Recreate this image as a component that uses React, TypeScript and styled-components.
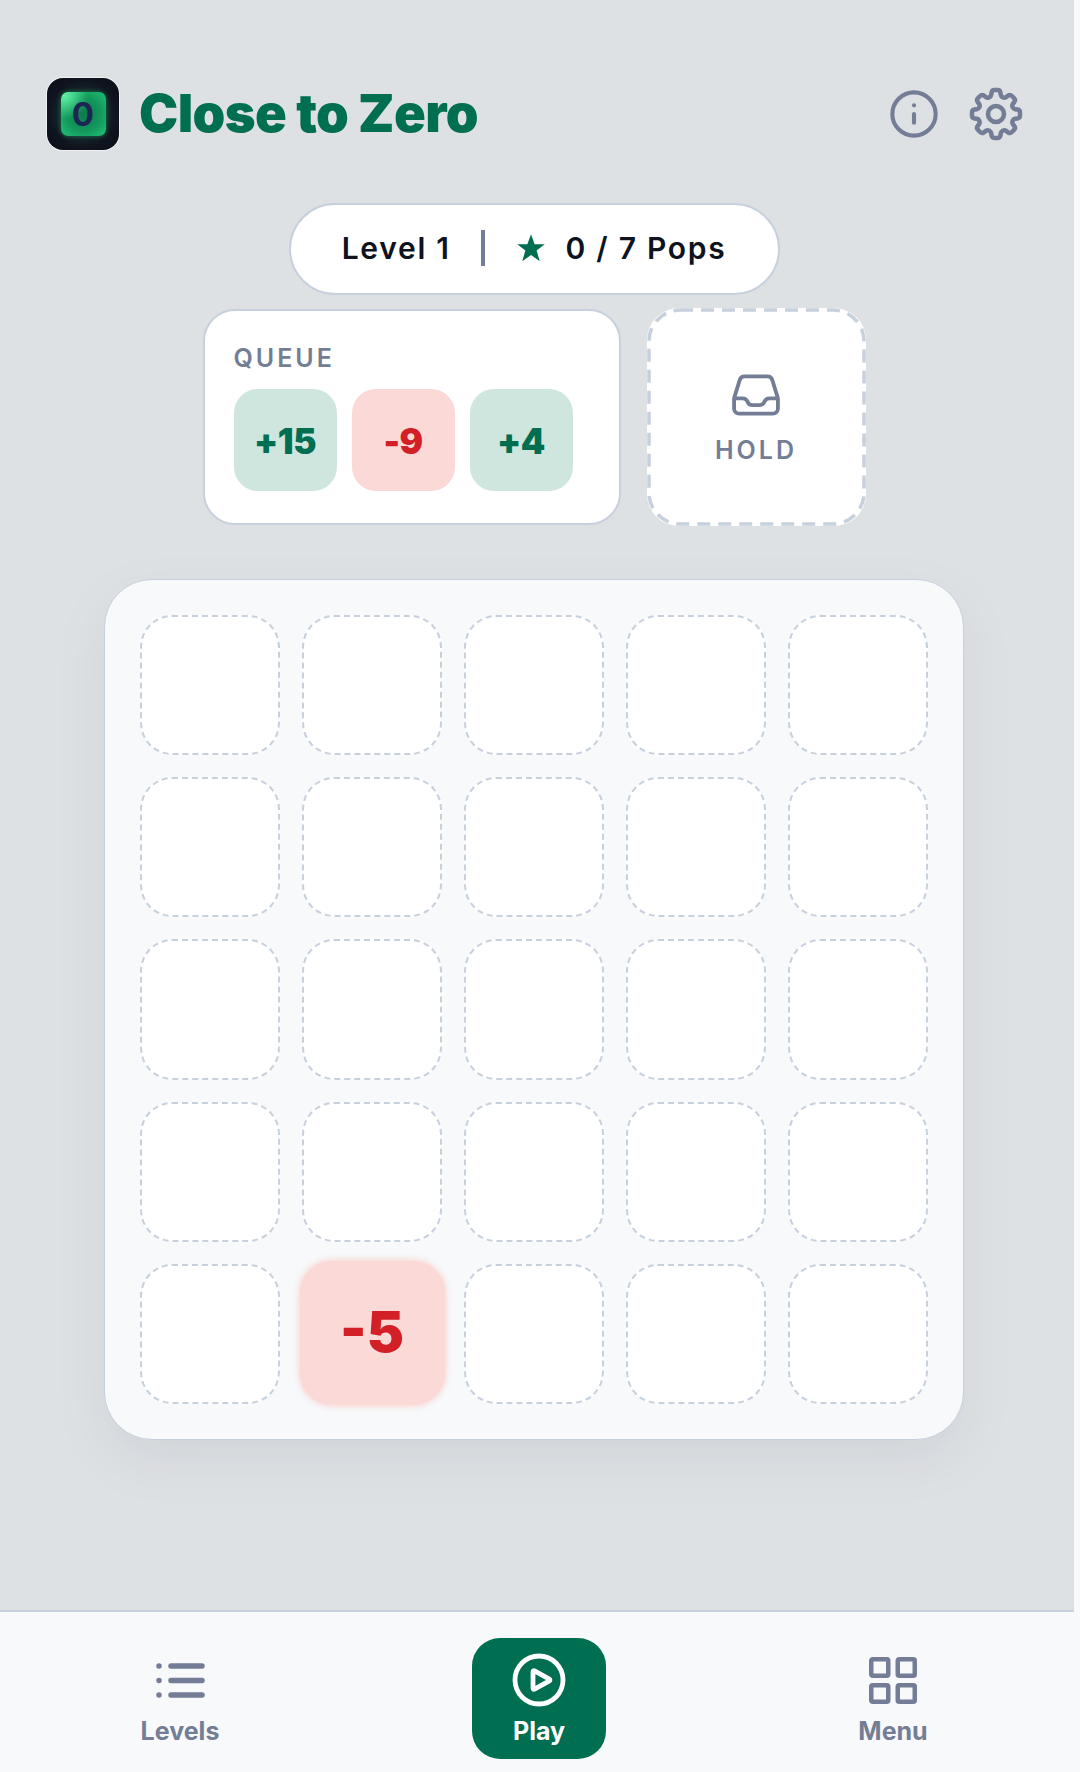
import React from 'react';
import styled, { createGlobalStyle } from 'styled-components';
import { HiOutlineCog8Tooth, HiOutlineInbox, HiOutlinePlayCircle } from 'react-icons/hi2';
import { Info } from 'lucide-react';

const colors = {
  page: '#dee1e4',
  panel: '#f7f9fb',
  line: '#c7d0dd',
  slate: '#737d95',
  green: '#006e51',
  greenSoft: '#cfe6df',
  red: '#d32026',
  redSoft: '#fad9d7',
  ink: '#0e1320',
};

const GlobalStyle = createGlobalStyle`
  html, body {
    margin: 0;
    padding: 0;
    background: ${colors.panel};
    font-family: Inter, "Liberation Sans", sans-serif;
  }
`;

const Page = styled.div`
  width: 1074px;
  height: 1772px;
  background: ${colors.page};
  display: flex;
  flex-direction: column;
`;

const Main = styled.main`
  flex: 1;
  box-sizing: border-box;
  padding-right: 6px;
  display: flex;
  flex-direction: column;
  align-items: center;
`;

const Header = styled.header`
  align-self: stretch;
  display: flex;
  align-items: center;
  justify-content: space-between;
  padding: 78px 40px 0 47px;
  height: 72px;
`;

const Brand = styled.div`
  display: flex;
  align-items: center;
  gap: 20px;
`;

const Logo = styled.div`
  width: 72px;
  height: 72px;
  border-radius: 16px;
  background: radial-gradient(circle at 50% 50%, #1d4a3c 0%, #10141f 66%, #0b0e16 100%);
  box-shadow: 0 0 0 1px rgba(255, 255, 255, 0.5);
  display: flex;
  align-items: center;
  justify-content: center;
`;

const LogoKey = styled.div`
  width: 45px;
  height: 44px;
  border-radius: 7px;
  background:
    radial-gradient(circle at 8% 8%, #5ff0a4 0%, rgba(95, 240, 164, 0) 40%),
    radial-gradient(circle at 50% 50%, #0c7a4d 0%, #13985c 55%, #22c277 100%);
  box-shadow: 0 0 5px rgba(40, 200, 120, 0.5);
  color: #1b2652;
  font-size: 33px;
  font-weight: 700;
  display: flex;
  align-items: center;
  justify-content: center;
`;

const Title = styled.h1`
  margin: -2px 0 0;
  font-size: 52.5px;
  line-height: 56px;
  font-weight: 900;
  letter-spacing: -0.6px;
  color: ${colors.green};
`;

const HeaderIcons = styled.div`
  display: flex;
  align-items: center;
  gap: 24px;
  color: ${colors.slate};
`;

const LevelPill = styled.div`
  margin-top: 53px;
  width: 491px;
  height: 92px;
  box-sizing: border-box;
  padding-bottom: 2px;
  border: 2px solid ${colors.line};
  border-radius: 46px;
  background: #fff;
  display: flex;
  align-items: center;
  justify-content: center;
  font-size: 30px;
  font-weight: 600;
  letter-spacing: 1.7px;
  color: ${colors.ink};
`;

const Divider = styled.span`
  width: 4px;
  height: 36px;
  background: ${colors.slate};
  margin: 0 31px 0 30px;
`;

const Star = styled.span`
  color: ${colors.green};
  margin-right: 20px;
  display: flex;
`;

const TrayRow = styled.div`
  margin-top: 13px;
  display: flex;
  align-items: center;
  gap: 26px;
`;

const Queue = styled.section`
  width: 418px;
  height: 216px;
  box-sizing: border-box;
  padding: 32px 29px;
  background: #fff;
  border: 2px solid ${colors.line};
  border-radius: 32px;
`;

const TrayLabel = styled.div`
  font-size: 25px;
  line-height: 30px;
  font-weight: 600;
  letter-spacing: 3px;
  color: ${colors.slate};
`;

const Chips = styled.div`
  margin-top: 16px;
  display: flex;
  gap: 15px;
`;

const Chip = styled.div<{ $positive: boolean }>`
  width: 103px;
  height: 102px;
  box-sizing: border-box;
  padding-top: 2px;
  border-radius: 24px;
  background: ${(p) => (p.$positive ? colors.greenSoft : colors.redSoft)};
  color: ${(p) => (p.$positive ? colors.green : colors.red)};
  font-size: 35px;
  font-weight: 900;
  letter-spacing: -0.5px;
  display: flex;
  align-items: center;
  justify-content: center;
`;

const Hold = styled.section`
  position: relative;
  width: 219px;
  height: 218px;
  box-sizing: border-box;
  padding-bottom: 2px;
  background: #fff;
  border-radius: 32px;
  display: flex;
  flex-direction: column;
  align-items: center;
  justify-content: center;
  gap: 13px;
  color: ${colors.slate};
`;

// chrome's own dashes come out too short at this thickness
const HoldOutline = styled.svg`
  position: absolute;
  inset: 0;
  width: 100%;
  height: 100%;
  fill: none;
  stroke: ${colors.line};
  stroke-width: 3.5;
  stroke-dasharray: 13 8;
`;

const Board = styled.section`
  margin-top: 53px;
  width: 860px;
  height: 861px;
  box-sizing: border-box;
  padding: 35px 35px;
  background: ${colors.panel};
  border: 1px solid ${colors.line};
  border-radius: 48px;
  box-shadow: 0 20px 50px rgba(100, 110, 125, 0.1);
  display: grid;
  grid-template-columns: repeat(5, minmax(0, 1fr));
  grid-template-rows: repeat(5, minmax(0, 1fr));
  gap: 22px;
`;

const Cell = styled.div`
  box-sizing: border-box;
  background: #fff;
  border: 2px dashed ${colors.line};
  border-radius: 32px;
  display: flex;
  align-items: center;
  justify-content: center;
`;

const Tile = styled.div`
  width: 145px;
  height: 144px;
  flex: none;
  box-sizing: border-box;
  padding-bottom: 2px;
  margin-top: -1px;
  border-radius: 32px;
  background: ${colors.redSoft};
  box-shadow: 0 0 6px 1px rgba(250, 205, 200, 0.9);
  color: ${colors.red};
  font-size: 56px;
  font-weight: 900;
  display: flex;
  align-items: center;
  justify-content: center;
`;

const Nav = styled.nav`
  height: 162px;
  box-sizing: border-box;
  padding-top: 26px;
  background: ${colors.panel};
  border-top: 2px solid ${colors.line};
  display: grid;
  grid-template-columns: 360px 358px 350px;
  align-items: start;
  justify-items: center;
`;

const NavItem = styled.div<{ $active?: boolean }>`
  width: 134px;
  height: 121px;
  box-sizing: border-box;
  padding-top: 10px;
  border-radius: 28px;
  background: ${(p) => (p.$active ? colors.green : 'transparent')};
  color: ${(p) => (p.$active ? '#fff' : colors.slate)};
  font-size: 25px;
  line-height: 30px;
  font-weight: 700;
  display: flex;
  flex-direction: column;
  align-items: center;
`;

const NavIcon = styled.div`
  height: 64px;
  margin-bottom: 4px;
  display: flex;
  align-items: center;
`;

const ListIcon = styled.svg`
  width: 49px;
  height: 35px;
  fill: none;
  stroke: currentColor;
  stroke-width: 5.5;
  stroke-linecap: round;
`;

const GridIcon = styled.svg`
  width: 48px;
  height: 47px;
  fill: none;
  stroke: currentColor;
  stroke-width: 4.5;
`;

const cells = Array.from({ length: 25 }, (_, i) => i);
const queue = ['+15', '-9', '+4'];
const listRows = [3, 17.5, 32];

export default function App() {
  return (
    <Page>
      <GlobalStyle />
      <Main>
        <Header>
          <Brand>
            <Logo>
              <LogoKey>0</LogoKey>
            </Logo>
            <Title>Close to Zero</Title>
          </Brand>
          <HeaderIcons>
            <Info size={52} strokeWidth={1.9} />
            <HiOutlineCog8Tooth size={64} strokeWidth={1.7} />
          </HeaderIcons>
        </Header>

        <LevelPill>
          Level 1
          <Divider />
          <Star>
            <svg width="30" height="30" viewBox="0 0 24 24" fill="currentColor">
              <path d="M12 1l2.900 8h8.100l-6.500 5 2.500 8.500L12 17.500l-7 5 2.500-8.500L1 9h8.100z" />
            </svg>
          </Star>
          0 / 7 Pops
        </LevelPill>

        <TrayRow>
          <Queue>
            <TrayLabel>QUEUE</TrayLabel>
            <Chips>
              {queue.map((q) => (
                <Chip key={q} $positive={q[0] === '+'}>
                  {q}
                </Chip>
              ))}
            </Chips>
          </Queue>
          <Hold>
            <HoldOutline>
              <rect x="2" y="2" width="215" height="214" rx="31" />
            </HoldOutline>
            <HiOutlineInbox size={54} strokeWidth={1.7} />
            <TrayLabel>HOLD</TrayLabel>
          </Hold>
        </TrayRow>

        <Board>
          {cells.map((i) => (
            <Cell key={i}>{i === 21 && <Tile>-5</Tile>}</Cell>
          ))}
        </Board>
      </Main>

      <Nav>
        <NavItem>
          <NavIcon>
            <ListIcon viewBox="0 0 49 35">
              {listRows.map((y) => (
                <path key={y} d={`M3 ${y}h.01M15 ${y}H46`} />
              ))}
            </ListIcon>
          </NavIcon>
          Levels
        </NavItem>
        <NavItem $active>
          <NavIcon>
            <HiOutlinePlayCircle size={64} strokeWidth={1.8} />
          </NavIcon>
          Play
        </NavItem>
        <NavItem>
          <NavIcon>
            <GridIcon viewBox="0 0 48 47">
              <rect x="2.250" y="2.250" width="17" height="16.500" rx="1.500" />
              <rect x="28.750" y="2.250" width="17" height="16.500" rx="1.500" />
              <rect x="2.250" y="28.250" width="17" height="16.500" rx="1.500" />
              <rect x="28.750" y="28.250" width="17" height="16.500" rx="1.500" />
            </GridIcon>
          </NavIcon>
          Menu
        </NavItem>
      </Nav>
    </Page>
  );
}
